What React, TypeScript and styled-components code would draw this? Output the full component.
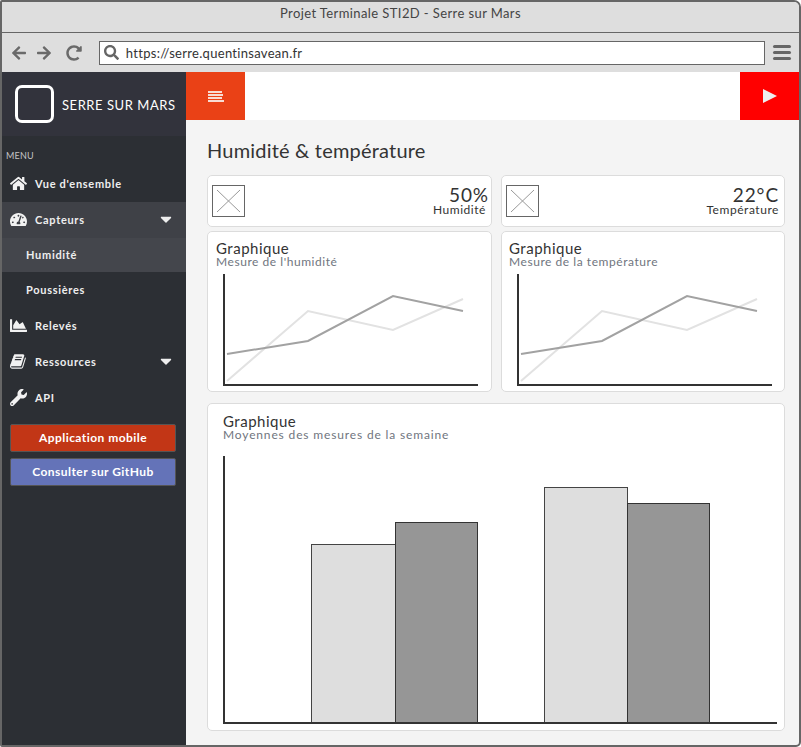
import React, { FC } from "react";
import styled, { createGlobalStyle } from "styled-components";
import {
  FaArrowLeft,
  FaArrowRight,
  FaCaretDown,
  FaChartArea,
  FaHome,
  FaRedoAlt,
  FaSearch,
  FaTachometerAlt,
  FaWrench,
} from "react-icons/fa";

const GlobalStyle = createGlobalStyle`
  html, body {
    margin: 0;
    padding: 0;
    background: #fff;
    font-family: "Lato", "Open Sans", sans-serif;
  }
  * { box-sizing: border-box; }
`;

const Window = styled.div`
  width: 801px;
  height: 747px;
  border: 2px solid #666;
  border-radius: 2px 7px 5px 2px;
  display: flex;
  flex-flow: column;
  overflow: hidden;
  background: #f4f4f4;
`;

const TitleBar = styled.div`
  height: 31px;
  flex-shrink: 0;
  background: #dedede;
  border-bottom: 1px solid #666;
  display: flex;
  align-items: center;
  justify-content: center;
  padding-bottom: 8px;
  font-size: 13px;
  letter-spacing: 0.4px;
  color: #444;
`;

const Toolbar = styled.div`
  height: 39px;
  flex-shrink: 0;
  background: #dedede;
  display: flex;
  align-items: center;
  padding: 0 8px 0 9px;
  color: #6a6a6a;
`;

const NavIcons = styled.div`
  display: flex;
  align-items: center;
  gap: 9px;
  width: 88px;
  font-size: 16px;
`;

const RefreshIcon = styled(FaRedoAlt)`
  margin-left: 5px;
`;

const AddressBar = styled.div`
  width: 668px;
  height: 24px;
  background: #fff;
  border: 1px solid #666;
  display: flex;
  align-items: center;
  gap: 7px;
  padding-left: 4px;
  font-size: 13px;
  letter-spacing: 0.3px;
  color: #333;
`;

const Burger = styled.div`
  margin-left: 8px;
  display: flex;
  flex-flow: column;
  gap: 2.5px;
`;

const BurgerBar = styled.span`
  display: block;
  width: 18px;
  height: 3.5px;
  border-radius: 2px;
  background: #666;
`;

const Body = styled.div`
  flex: 1;
  display: flex;
  min-height: 0;
`;

const Sidebar = styled.aside`
  width: 184px;
  flex-shrink: 0;
  background: #2c2f34;
  color: #f2f2f2;
`;

const Brand = styled.div`
  height: 64px;
  background: #32333c;
  display: flex;
  align-items: center;
  padding-left: 13px;
  gap: 9px;
  font-size: 13px;
  letter-spacing: 0.55px;
  color: #fff;
`;

const BrandText = styled.span`
  margin: 2px 0 0 -1px;
`;

const LogoBox = styled.div`
  width: 39px;
  height: 38px;
  border: 3px solid #fff;
  border-radius: 7px;
`;

const MenuLabel = styled.div`
  padding: 14px 0 0 4px;
  height: 30px;
  font-size: 9px;
  letter-spacing: 0.2px;
  color: #c4c4c4;
`;

const MenuItem = styled.div<{ $active?: boolean; $sub?: boolean }>`
  height: ${({ $active, $sub }) => ($active && $sub ? "34px" : "36px")};
  display: flex;
  align-items: center;
  padding: 0 11px 2px ${({ $sub }) => ($sub ? "24px" : "8px")};
  font-size: 11px;
  font-weight: 700;
  letter-spacing: 0.7px;
  color: #eee;
  background: ${({ $active, $sub }) =>
    $active ? ($sub ? "#44464c" : "#3f4147") : "transparent"};
`;

const MenuIcon = styled.span`
  width: 25px;
  font-size: 17px;
  line-height: 1;
  display: flex;
  align-items: center;
  color: #f2f2f2;
`;

const Caret = styled.span`
  margin-left: auto;
  font-size: 18px;
  line-height: 1;
  display: flex;
  color: #eee;
`;

const SideButton = styled.div<{ $color: string }>`
  width: 166px;
  height: 28px;
  margin: 0 0 6px 8px;
  padding-bottom: 2px;
  background: ${({ $color }) => $color};
  border: 1px solid #555;
  border-radius: 2px;
  display: flex;
  align-items: center;
  justify-content: center;
  font-size: 12px;
  font-weight: 700;
  letter-spacing: 0.45px;
  color: #fff;
`;

const ButtonStack = styled.div`
  padding-top: 8px;
`;

const Main = styled.main`
  flex: 1;
  min-width: 0;
  display: flex;
  flex-flow: column;
`;

const TopBar = styled.div`
  height: 48px;
  flex-shrink: 0;
  background: #fff;
  display: flex;
  justify-content: space-between;
`;

const TopButton = styled.div<{ $color: string }>`
  width: 59px;
  background: ${({ $color }) => $color};
  display: flex;
  align-items: center;
  justify-content: center;
`;

const MenuGlyph = styled.div`
  display: flex;
  flex-flow: column;
  gap: 1px;
  width: 16px;
`;

const MenuGlyphBar = styled.span<{ $w: number }>`
  display: block;
  height: 2px;
  width: ${({ $w }) => $w}px;
  background: #f8dcd3;
`;

const Play = styled.div`
  width: 0;
  height: 0;
  border-left: 14px solid #eee;
  border-top: 7px solid transparent;
  border-bottom: 7px solid transparent;
`;

const Content = styled.div`
  padding: 18px 14px 0 21px;
`;

const PageTitle = styled.h1`
  margin: 0 0 13px;
  height: 24px;
  font-size: 20px;
  line-height: 24px;
  font-weight: 400;
  letter-spacing: 0.2px;
  color: #333;
`;

const Grid = styled.div`
  display: grid;
  grid-template-columns: 285px 284px;
  column-gap: 9px;
`;

const ChartGrid = styled(Grid)`
  margin-top: 4px;
`;

const Card = styled.div`
  background: #fff;
  border: 1px solid #dcdcdc;
  border-radius: 5px;
`;

const StatCard = styled(Card)<{ $pad: number }>`
  height: 52px;
  display: flex;
  align-items: flex-start;
  justify-content: space-between;
  padding: 9px ${({ $pad }) => $pad}px 0 4px;
`;

const StatText = styled.div`
  text-align: right;
  color: #333;
`;

const StatValue = styled.div`
  font-size: 19px;
  line-height: 19px;
  letter-spacing: 0.9px;
`;

const StatLabel = styled.div<{ $gap: number }>`
  font-size: 12px;
  line-height: 12px;
  letter-spacing: 0.55px;
  margin-right: ${({ $gap }) => $gap}px;
`;

const ChartCard = styled(Card)<{ $pad: number }>`
  height: 161px;
  padding: 9px 0 0 ${({ $pad }) => $pad}px;
`;

const ChartTitle = styled.div`
  font-size: 15px;
  line-height: 15px;
  letter-spacing: 0.5px;
  color: #333;
`;

const ChartSub = styled.div`
  font-size: 12px;
  line-height: 12px;
  letter-spacing: 0.55px;
  color: #70757e;
`;

const ChartCell = styled.div<{ $indent: number }>`
  margin: 5px 0 0 ${({ $indent }) => $indent}px;
`;

const WideCard = styled(Card)`
  margin-top: 11px;
  padding: 10px 0 0 15px;
  width: 578px;
  height: 328px;
`;

const WideSub = styled(ChartSub)`
  letter-spacing: 0.85px;
`;

const WideCell = styled.div`
  margin-top: 11px;
`;

const ChartSvg = styled.svg`
  display: block;
`;

const Placeholder: FC = () => (
  <svg width="33" height="32" viewBox="0 0 33 32">
    <rect x="0.5" y="0.5" width="32" height="31" fill="#fff" stroke="#666" />
    <path d="M5 5 L28 27 M28 5 L5 27" stroke="#999" strokeWidth="1" fill="none" />
  </svg>
);

// slanted book, the one the sidebar uses
const BookIcon: FC = () => (
  <svg width="17" height="17" viewBox="0 0 1792 1792" fill="currentColor">
    <path d="M1639 478q40 57 18 129l-275 906q-19 64-76.5 107.5t-122.5 43.5h-923q-77 0-148.5-53.5t-99.5-131.5q-24-67-2-127 0-4 3-27t4-37q1-8-3-21.5t-3-19.5q2-11 8-21t16.5-23.5 16.5-23.5q23-38 45-91.5t30-91.5q3-10 .5-30t-.5-28q3-11 17-28t17-23q21-36 42-92t25-90q1-9-2.5-32t.5-28q4-13 22-30.5t22-22.5q19-26 42.5-84.5t27.5-96.5q1-8-3-25.5t-2-26.5q2-8 9-18t18-23 17-21q8-12 16.5-30.5t15-35 16-36 19.5-32 26.5-23.5 36-11.5 47.5 5.5l-1 3q38-9 51-9h761q74 0 114 56t18 130l-274 906q-36 119-71.5 153.5t-128.5 34.5h-869q-27 0-38 15-11 16-1 43 24 70 144 70h923q29 0 56-15.5t35-41.5l300-987q7-22 5-57 38 15 59 43zm-1064 2q-4 13 2 22.5t20 9.5h608q13 0 25.5-9.5t16.5-22.5l21-64q4-13-2-22.5t-20-9.5h-608q-13 0-25.5 9.5t-16.5 22.5zm-83 256q-4 13 2 22.5t20 9.5h608q13 0 25.5-9.5t16.5-22.5l21-64q4-13-2-22.5t-20-9.5h-608q-13 0-25.5 9.5t-16.5 22.5z" />
  </svg>
);

const LineChart: FC = () => (
  <ChartSvg width="262" height="113" viewBox="0 0 262 113">
    <polyline
      points="4,108 85,38 170,57 240,26"
      fill="none"
      stroke="#e2e2e2"
      strokeWidth="2"
    />
    <polyline
      points="4,81 85,68 170,23 240,38"
      fill="none"
      stroke="#a2a2a2"
      strokeWidth="2"
    />
    <path d="M1 1 V112 H255" fill="none" stroke="#333" strokeWidth="2" />
  </ChartSvg>
);

const BarChart: FC = () => (
  <ChartSvg width="560" height="272" viewBox="0 0 560 272">
    <rect x="88.5" y="92.5" width="84" height="178" fill="#dedede" stroke="#444" />
    <rect x="172.5" y="70.5" width="82" height="200" fill="#969696" stroke="#333" />
    <rect x="321.5" y="35.5" width="83" height="235" fill="#dedede" stroke="#444" />
    <rect x="404.5" y="51.5" width="82" height="219" fill="#969696" stroke="#333" />
    <path d="M1 4 V271 H554" fill="none" stroke="#333" strokeWidth="2" />
  </ChartSvg>
);

const App: FC = () => (
  <>
    <GlobalStyle />
    <Window>
      <TitleBar>Projet Terminale STI2D - Serre sur Mars</TitleBar>
      <Toolbar>
        <NavIcons>
          <FaArrowLeft />
          <FaArrowRight />
          <RefreshIcon />
        </NavIcons>
        <AddressBar>
          <FaSearch size={15} color="#666" />
          https://serre.quentinsavean.fr
        </AddressBar>
        <Burger>
          <BurgerBar />
          <BurgerBar />
          <BurgerBar />
        </Burger>
      </Toolbar>
      <Body>
        <Sidebar>
          <Brand>
            <LogoBox />
            <BrandText>SERRE SUR MARS</BrandText>
          </Brand>
          <MenuLabel>MENU</MenuLabel>
          <MenuItem>
            <MenuIcon>
              <FaHome />
            </MenuIcon>
            Vue d'ensemble
          </MenuItem>
          <MenuItem $active>
            <MenuIcon>
              <FaTachometerAlt />
            </MenuIcon>
            Capteurs
            <Caret>
              <FaCaretDown />
            </Caret>
          </MenuItem>
          <MenuItem $active $sub>
            Humidité
          </MenuItem>
          <MenuItem $sub>Poussières</MenuItem>
          <MenuItem>
            <MenuIcon>
              <FaChartArea />
            </MenuIcon>
            Relevés
          </MenuItem>
          <MenuItem>
            <MenuIcon>
              <BookIcon />
            </MenuIcon>
            Ressources
            <Caret>
              <FaCaretDown />
            </Caret>
          </MenuItem>
          <MenuItem>
            <MenuIcon>
              <FaWrench />
            </MenuIcon>
            API
          </MenuItem>
          <ButtonStack>
            <SideButton $color="#c23616">Application mobile</SideButton>
            <SideButton $color="#6473b8">Consulter sur GitHub</SideButton>
          </ButtonStack>
        </Sidebar>
        <Main>
          <TopBar>
            <TopButton $color="#ea4116">
              <MenuGlyph>
                <MenuGlyphBar $w={14} />
                <MenuGlyphBar $w={15} />
                <MenuGlyphBar $w={14} />
                <MenuGlyphBar $w={16} />
              </MenuGlyph>
            </TopButton>
            <TopButton $color="#ff0000">
              <Play />
            </TopButton>
          </TopBar>
          <Content>
            <PageTitle>Humidité &amp; température</PageTitle>
            <Grid>
              <StatCard $pad={2}>
                <Placeholder />
                <StatText>
                  <StatValue>50%</StatValue>
                  <StatLabel $gap={3}>Humidité</StatLabel>
                </StatText>
              </StatCard>
              <StatCard $pad={5}>
                <Placeholder />
                <StatText>
                  <StatValue>22°C</StatValue>
                  <StatLabel $gap={0}>Température</StatLabel>
                </StatText>
              </StatCard>
            </Grid>
            <ChartGrid>
              <ChartCard $pad={8}>
                <ChartTitle>Graphique</ChartTitle>
                <ChartSub>Mesure de l'humidité</ChartSub>
                <ChartCell $indent={7}>
                  <LineChart />
                </ChartCell>
              </ChartCard>
              <ChartCard $pad={7}>
                <ChartTitle>Graphique</ChartTitle>
                <ChartSub>Mesure de la température</ChartSub>
                <ChartCell $indent={8}>
                  <LineChart />
                </ChartCell>
              </ChartCard>
            </ChartGrid>
            <WideCard>
              <ChartTitle>Graphique</ChartTitle>
              <WideSub>Moyennes des mesures de la semaine</WideSub>
              <WideCell>
                <BarChart />
              </WideCell>
            </WideCard>
          </Content>
        </Main>
      </Body>
    </Window>
  </>
);

export default App;
